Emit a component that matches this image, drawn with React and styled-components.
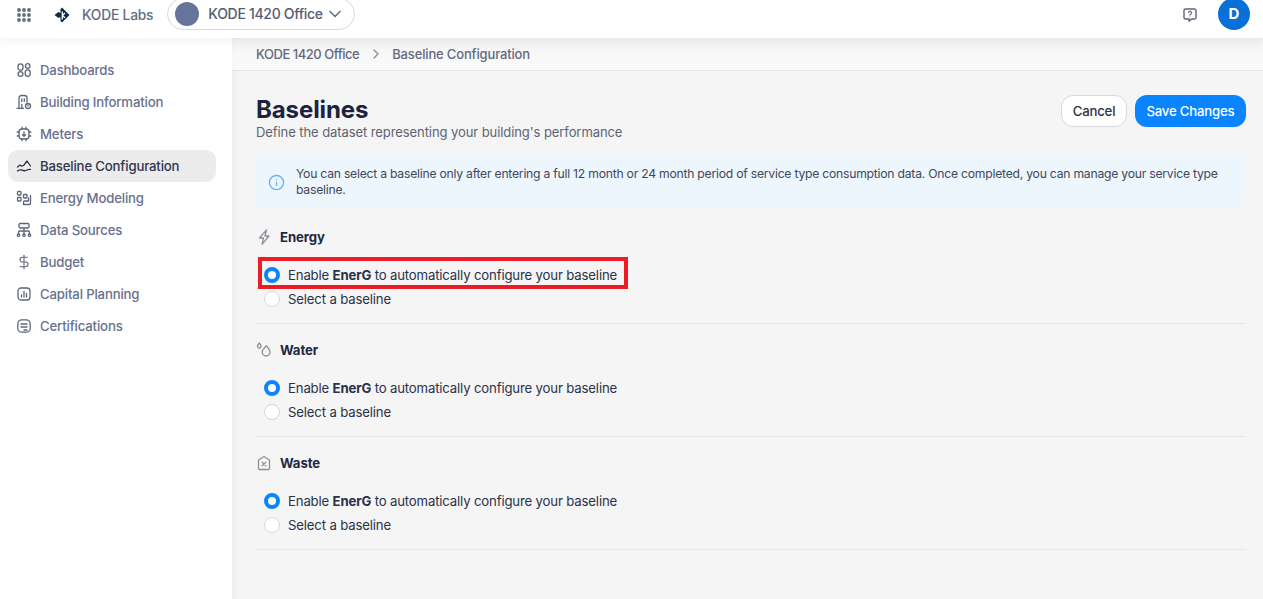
import React from "react";
import styled, { createGlobalStyle } from "styled-components";
import { ChevronDown, ChevronRight, Info, DollarSign } from "lucide-react";

const Global = createGlobalStyle`
  html, body { margin: 0; padding: 0; height: 100%; overflow: hidden; background: #fff; }
  body { font-family: Inter, "Noto Sans", sans-serif; -webkit-font-smoothing: antialiased; }
  #root { height: 100%; }
  * { box-sizing: border-box; }
`;

const Page = styled.div`
  width: 1263px; height: 599px; display: flex; flex-direction: column; overflow: hidden;
`;
const TopBar = styled.header`
  height: 38px; flex: none; display: flex; align-items: flex-start; background: #fff;
  padding: 0 13px 0 17px; position: relative; z-index: 2;
  box-shadow: 0 2px 10px rgba(30, 40, 60, 0.07);
`;
const TopRow = styled.div`
  display: flex; align-items: center; height: 29px;
`;
const GridSlot = styled.span` display: flex; margin-right: 23px; `;
const Org = styled.span`
  font-size: 13.8px; font-weight: 500; color: #626c84; margin-left: 12px; letter-spacing: -0.2px; white-space: nowrap;
`;
const Pill = styled.div`
  height: 32px; margin-top: -2px; margin-left: 14px; width: 188px; border: 1px solid #d8d9dc; border-radius: 16px;
  display: flex; align-items: center; padding: 0 7px; background: #fff;
`;
const Avatar = styled.span`
  width: 24px; height: 24px; border-radius: 50%; background: #67749a; flex: none;
`;
const PillText = styled.span`
  font-size: 14px; font-weight: 500; color: #525c74; margin-left: 9px; letter-spacing: -0.3px; white-space: nowrap;
`;
const PillChevron = styled(ChevronDown)` margin-left: 2px; color: #6b7280; flex: none; `;
const Spacer = styled.div` flex: 1; `;
const UserBadge = styled.span`
  width: 32px; height: 32px; margin-top: -2px; margin-left: 20px; border-radius: 50%; background: #0a70d9; color: #fff;
  font-size: 15px; font-weight: 700; display: flex; align-items: center; justify-content: center;
`;
const Body = styled.div` flex: 1; display: flex; min-height: 0; `;
const Sidebar = styled.nav`
  width: 232px; flex: none; background: #fff; padding: 16px 16px 0 8px; display: flex; flex-direction: column;
`;
const NavItem = styled.div`
  height: 32px; border-radius: 10px; display: flex; align-items: center; gap: 8px; padding-left: 8px;
  background: ${p => (p.$active ? "#ececec" : "transparent")};
  color: ${p => (p.$active ? "#2e3650" : "#68718c")};
  font-size: 13.2px; font-weight: 500; letter-spacing: -0.17px; white-space: nowrap;
  svg { flex: none; color: ${p => (p.$active ? "#2e3548" : "#5f6675")}; }
`;
const Main = styled.main`
  flex: 1; min-width: 0; background: #f5f5f5; display: flex; flex-direction: column;
  box-shadow: inset 7px 0 7px -7px rgba(30, 40, 60, 0.08);
`;
const Crumbs = styled.div`
  height: 33px; flex: none; display: flex; align-items: center; padding-left: 24px; gap: 8.5px;
  border-bottom: 1px solid #e6e6e8; color: #626a7c; font-size: 13px; font-weight: 500; letter-spacing: -0.15px;
  background: linear-gradient(rgba(240,240,240,.6), rgba(250,250,250,.8) 60%);
  svg { color: #8a8f99; }
`;
const CrumbRoot = styled.span` letter-spacing: -0.47px; `;
const Content = styled.div` padding: 24px 17px 0 24px; `;
const HeadRow = styled.div` display: flex; justify-content: space-between; align-items: flex-start; `;
const Title = styled.h1`
  margin: 0; font-size: 24px; line-height: 30px; font-weight: 700; color: #1a2340; letter-spacing: -0.1px;
`;
const Sub = styled.p`
  margin: 0; font-size: 13px; line-height: 15px; font-weight: 400; color: #5b6374; letter-spacing: -0.08px;
`;
const Actions = styled.div` display: flex; gap: 8px; `;
const Button = styled.button`
  height: 32px; border-radius: 12px; font-family: inherit; font-size: 13.2px; font-weight: 500; letter-spacing: -0.2px;
  padding: 0; width: ${p => (p.$primary ? "111px" : "66px")};
  background: ${p => (p.$primary ? "#0a84ff" : "#fff")};
  color: ${p => (p.$primary ? "#fff" : "#2b3245")};
  border: ${p => (p.$primary ? "none" : "1px solid #d8d9dc")};
`;
const Notice = styled.div`
  margin-top: 15px; height: 54px; border-radius: 8px; background: #eef6fd; display: flex; align-items: center;
  padding: 0 12px 0 12px; gap: 11px; font-size: 12.2px; line-height: 16px; color: #3f475c; letter-spacing: -0.24px;
  svg { flex: none; color: #6cb2f2; }
`;
const Section = styled.section`
  padding: 16px 0 16px; border-bottom: 1px solid #e7e7e9;
  &:first-of-type { padding-top: 18px; }
`;
const SectionHead = styled.div`
  display: flex; align-items: center; gap: 8px; height: 20px; font-size: 13.2px; font-weight: 700; color: #1f2740; letter-spacing: -0.1px;
  svg { flex: none; color: #8c919c; }
`;
const Options = styled.div` margin-top: 20px; display: flex; flex-direction: column; gap: 8px; align-items: flex-start; `;
const Option = styled.label`
  height: 16px; display: flex; align-items: center; gap: 8px; position: relative;
  font-size: 13.2px; color: #2a3148; letter-spacing: -0.17px; white-space: nowrap; margin-left: 8px;
  b { font-weight: 700; }
`;
const Highlight = styled.span`
  position: absolute; left: -6px; right: -11px; top: -10px; bottom: -6px; border: 4px solid #ec1c24; pointer-events: none;
`;
const Radio = styled.span`
  width: 16px; height: 16px; border-radius: 50%; flex: none;
  background: #fff;
  border: ${p => (p.$on ? "4px solid #0a84ff" : "1px solid #d6d7da")};
`;

const I = ({ children, s = 16 }) => (
  <svg width={s} height={s} viewBox="0 0 16 16" fill="none" stroke="currentColor" strokeWidth="1.3" strokeLinecap="round" strokeLinejoin="round">{children}</svg>
);
const Dash = () => <I><rect x="2" y="1.800" width="5" height="6.400" rx="2.500"/><circle cx="11.700" cy="4" r="2.300"/><circle cx="4.500" cy="12" r="2.400"/><rect x="9.200" y="7.900" width="5" height="6.400" rx="2.500"/></I>;
const Building = () => <I><path d="M1 14.300h6.500M3 14.300V4a2.500 2.500 0 0 1 2.500-2.500h3A2.500 2.500 0 0 1 11 4v4"/><path d="M5.800 5v2.400M8.300 5v2.400M5.800 10.500v3.800"/><circle cx="12" cy="12" r="2.500"/><path d="M12 11v1.100"/></I>;
const Meter = () => <I><rect x="3" y="3" width="10" height="10" rx="3"/><path d="M6 1.200V3M10 1.200V3M6 13v1.800M10 13v1.800M1.200 6H3M1.200 10H3M13 6h1.800M13 10h1.800M8 5.800v4.400M6.500 8.700 8 10.200l1.500-1.500"/></I>;
const Baseline = () => <I><path d="M1.500 9 4 7l2 1.300L8 7l3-4 3.500 5"/><path d="M1.500 13c2-1.400 3-1.500 4.500-.8s3 .8 4.500 0 2.500-1 4-.8"/></I>;
const Model = () => <I><rect x="1.500" y="1.500" width="3.500" height="3.500" rx=".8"/><rect x="1.500" y="7.500" width="3.500" height="3.500" rx=".8"/><rect x="7.500" y="4.500" width="3.500" height="3.500" rx=".8"/><path d="M14.500 5.500v8a1 1 0 0 1-1 1h-6v-2.500a1 1 0 0 1 1-1h2"/><path d="M11 11h1.500V8"/></I>;
const Sources = () => <I><rect x="3" y="1.500" width="10" height="4.500" rx="1.200"/><path d="M8 6v6M2.500 12v-2a1 1 0 0 1 1-1h9a1 1 0 0 1 1 1v2"/><circle cx="2.500" cy="13.200" r="1.200"/><circle cx="8" cy="13.200" r="1.200"/><circle cx="13.500" cy="13.200" r="1.200"/></I>;
const Capital = () => <I><rect x="2" y="2" width="12" height="12" rx="3"/><path d="M5.500 11V9M8 11V5.500M10.500 11V7.500"/></I>;
const Cert = () => <I><rect x="1.800" y="1.800" width="12.400" height="12.400" rx="4"/><path d="M5 6h6M5 9h6M8 12h3"/></I>;
const Budget = () => <DollarSign size={16} strokeWidth={1.6} />;
const Grid = () => (
  <svg width="14" height="14" viewBox="0 0 14 14" fill="#656c7c">
    {[2, 7, 12].flatMap(y => [2, 7, 12].map(x => <circle key={x + "-" + y} cx={x} cy={y} r="1.900" />))}
  </svg>
);
const Logo = () => (
  <svg width="16" height="16" viewBox="0 0 16 16">
    <path d="M8 .5 15.500 8 8 15.500l-1.500-1.500V10L4.500 11 .5 8l4-3 2 1V2z" fill="#0f2a4a" />
    <path d="M8.300 4.500v8M8.300 8.500 11 6M8.300 8.500 11 10.800" stroke="#fff" strokeWidth="1.300" fill="none" />
  </svg>
);
const Help = () => (
  <svg width="16" height="16" viewBox="0 0 16 16" fill="none" stroke="#5f6675" strokeWidth="1.400" strokeLinejoin="round" strokeLinecap="round">
    <path d="M3.500 2h9A1.500 1.500 0 0 1 14 3.500v7a1.500 1.500 0 0 1-1.500 1.500H9.500l-2.500 2.200V12H3.500A1.500 1.500 0 0 1 2 10.500v-7A1.500 1.500 0 0 1 3.500 2z"/>
    <path d="M6.500 5.500A1.500 1.500 0 1 1 8.500 7.200C8 7.500 8 7.800 8 8.300M8 10h0" strokeWidth="1.100"/>
  </svg>
);
const Bolt = () => <I><path d="M10.500 .8 3.500 9h4L6 15.300l7-8.300H9z"/></I>;
const Drops = () => <I><path d="M10.300 3.800c2.500 2.800 3.700 4.400 3.700 6.300a3.900 3.900 0 0 1-7.800 0c0-1.900 1.500-3.600 4.100-6.300z"/><path d="M3.300 1C2.200 2.300 1.500 3.200 1.500 4.200a1.800 1.800 0 0 0 3.600 0c0-1-.8-2.100-1.800-3.200z"/></I>;
const Waste = () => <I><path d="M2.500 5 8 1.500 13.500 5v8.500a1 1 0 0 1-1 1h-9a1 1 0 0 1-1-1z"/><path d="M6.200 7.200l3.600 3.600M9.800 7.200l-3.600 3.600"/></I>;

const nav = [
  [Dash, "Dashboards"], [Building, "Building Information"], [Meter, "Meters"],
  [Baseline, "Baseline Configuration", true], [Model, "Energy Modeling"], [Sources, "Data Sources"],
  [Budget, "Budget"], [Capital, "Capital Planning"], [Cert, "Certifications"],
];
const sections = [
  [Bolt, "Energy", true], [Drops, "Water"], [Waste, "Waste"],
];

export default function App() {
  return (
    <Page>
      <Global />
      <TopBar>
        <TopRow>
          <GridSlot><Grid /></GridSlot>
          <Logo />
          <Org>KODE Labs</Org>
          <Pill>
            <Avatar />
            <PillText>KODE 1420 Office</PillText>
            <PillChevron size={20} />
          </Pill>
        </TopRow>
        <Spacer />
        <TopRow>
          <Help />
          <UserBadge>D</UserBadge>
        </TopRow>
      </TopBar>
      <Body>
        <Sidebar>
          {nav.map(([Icon, label, active]) => (
            <NavItem key={label} $active={active}><Icon />{label}</NavItem>
          ))}
        </Sidebar>
        <Main>
          <Crumbs>
            <CrumbRoot>KODE 1420 Office</CrumbRoot>
            <ChevronRight size={16} />
            <span>Baseline Configuration</span>
          </Crumbs>
          <Content>
            <HeadRow>
              <div>
                <Title>Baselines</Title>
                <Sub>Define the dataset representing your building's performance</Sub>
              </div>
              <Actions>
                <Button>Cancel</Button>
                <Button $primary>Save Changes</Button>
              </Actions>
            </HeadRow>
            <Notice>
              <Info size={17} strokeWidth={2} />
              <span>You can select a baseline only after entering a full 12 month or 24 month period of service type consumption data. Once completed, you can manage your service type baseline.</span>
            </Notice>
            {sections.map(([Icon, name, highlighted]) => (
              <Section key={name}>
                <SectionHead><Icon />{name}</SectionHead>
                <Options>
                  <Option>
                    <Radio $on />
                    <span>Enable <b>EnerG</b> to automatically configure your baseline</span>
                    {highlighted && <Highlight />}
                  </Option>
                  <Option><Radio />Select a baseline</Option>
                </Options>
              </Section>
            ))}
          </Content>
        </Main>
      </Body>
    </Page>
  );
}
